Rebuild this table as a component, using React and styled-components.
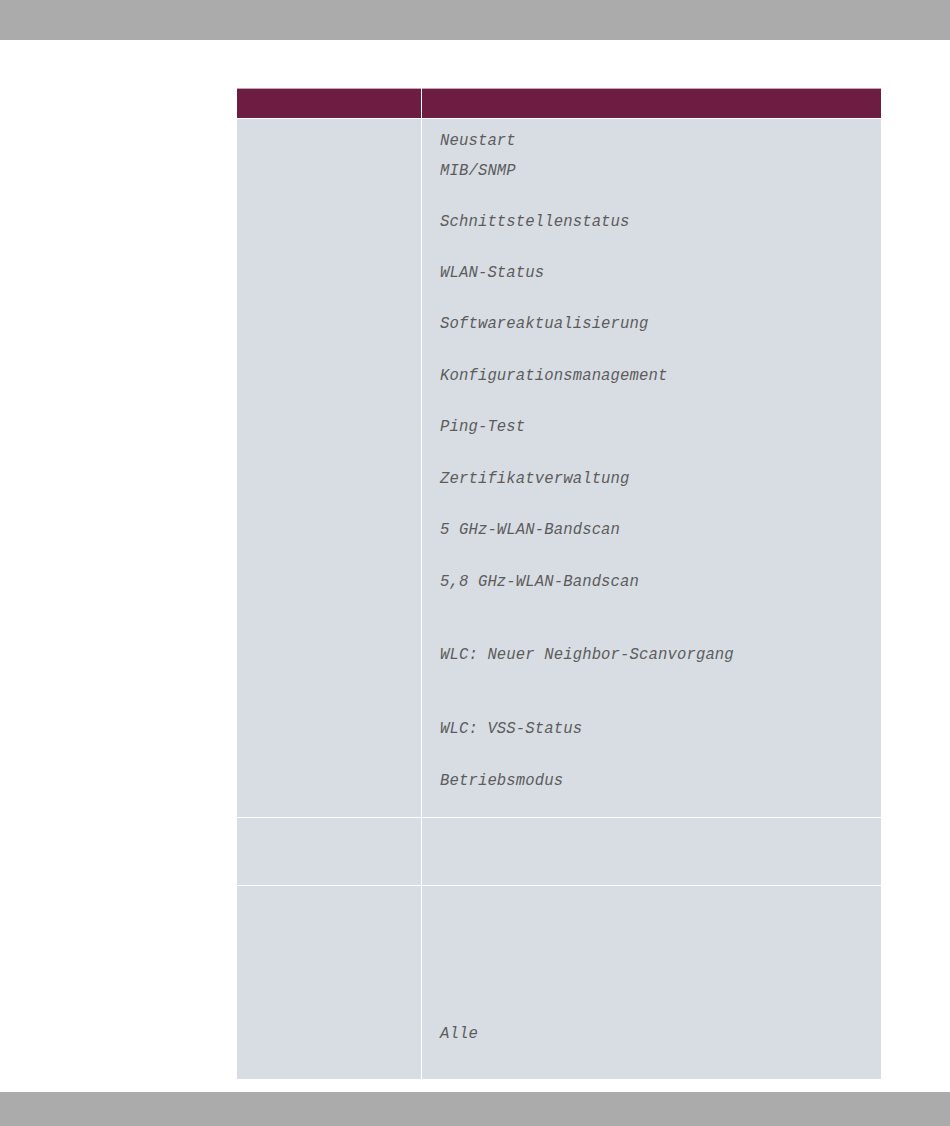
import React from 'react';
import styled, { createGlobalStyle } from 'styled-components';

const GlobalStyle = createGlobalStyle`
    html, body {
        margin: 0;
        padding: 0;
        background: #ffffff;
    }
`;

const Page = styled.div`
    width: 950px;
    height: 1126px;
    display: flex;
    flex-direction: column;
    font-family: "Liberation Mono", "Courier New", monospace;
`;

const TopBar = styled.div`
    height: 40px;
    background: #ababab;
    flex-shrink: 0;
`;

const Main = styled.div`
    flex: 1;
    padding: 48px 0 0 237px;
`;

const Table = styled.div`
    width: 644px;
    display: grid;
    grid-template-columns: 184px 459px;
    column-gap: 1px;
    row-gap: 1px;
    background: #ffffff;
`;

const HeadCell = styled.div`
    height: 29px;
    background: #6d1d42;
    border-top: 1px solid #c9a3b6;
`;

const Cell = styled.div`
    background: #d8dce3;
    height: ${props => props.h}px;
    box-sizing: border-box;
    padding: ${props => props.pt || 0}px 18px 0 18px;
`;

const Item = styled.div`
    font-size: 15.6px;
    line-height: 21px;
    letter-spacing: 0.12px;
    font-style: italic;
    color: #5c5c5c;
    white-space: nowrap;
    margin-top: ${props => props.gap || 0}px;
`;

const BottomBar = styled.div`
    height: 34px;
    background: #ababab;
    flex-shrink: 0;
`;

const actions = [
    { label: 'Neustart', gap: 0 },
    { label: 'MIB/SNMP', gap: 9 },
    { label: 'Schnittstellenstatus', gap: 30 },
    { label: 'WLAN-Status', gap: 30 },
    { label: 'Softwareaktualisierung', gap: 30 },
    { label: 'Konfigurationsmanagement', gap: 31 },
    { label: 'Ping-Test', gap: 30 },
    { label: 'Zertifikatverwaltung', gap: 31 },
    { label: '5 GHz-WLAN-Bandscan', gap: 30 },
    { label: '5,8 GHz-WLAN-Bandscan', gap: 31 },
    { label: 'WLC: Neuer Neighbor-Scanvorgang', gap: 52 },
    { label: 'WLC: VSS-Status', gap: 53 },
    { label: 'Betriebsmodus', gap: 31 },
];

const App = () => (
    <>
        <GlobalStyle />
        <Page>
            <TopBar />
            <Main>
                <Table>
                    <HeadCell />
                    <HeadCell />

                    <Cell h={698} />
                    <Cell h={698} pt={12}>
                        {actions.map(a => (
                            <Item key={a.label} gap={a.gap}>
                                {a.label}
                            </Item>
                        ))}
                    </Cell>

                    <Cell h={67} />
                    <Cell h={67} />

                    <Cell h={193} />
                    <Cell h={193} pt={138}>
                        <Item>Alle</Item>
                    </Cell>
                </Table>
            </Main>
            <BottomBar />
        </Page>
    </>
);

export default App;
